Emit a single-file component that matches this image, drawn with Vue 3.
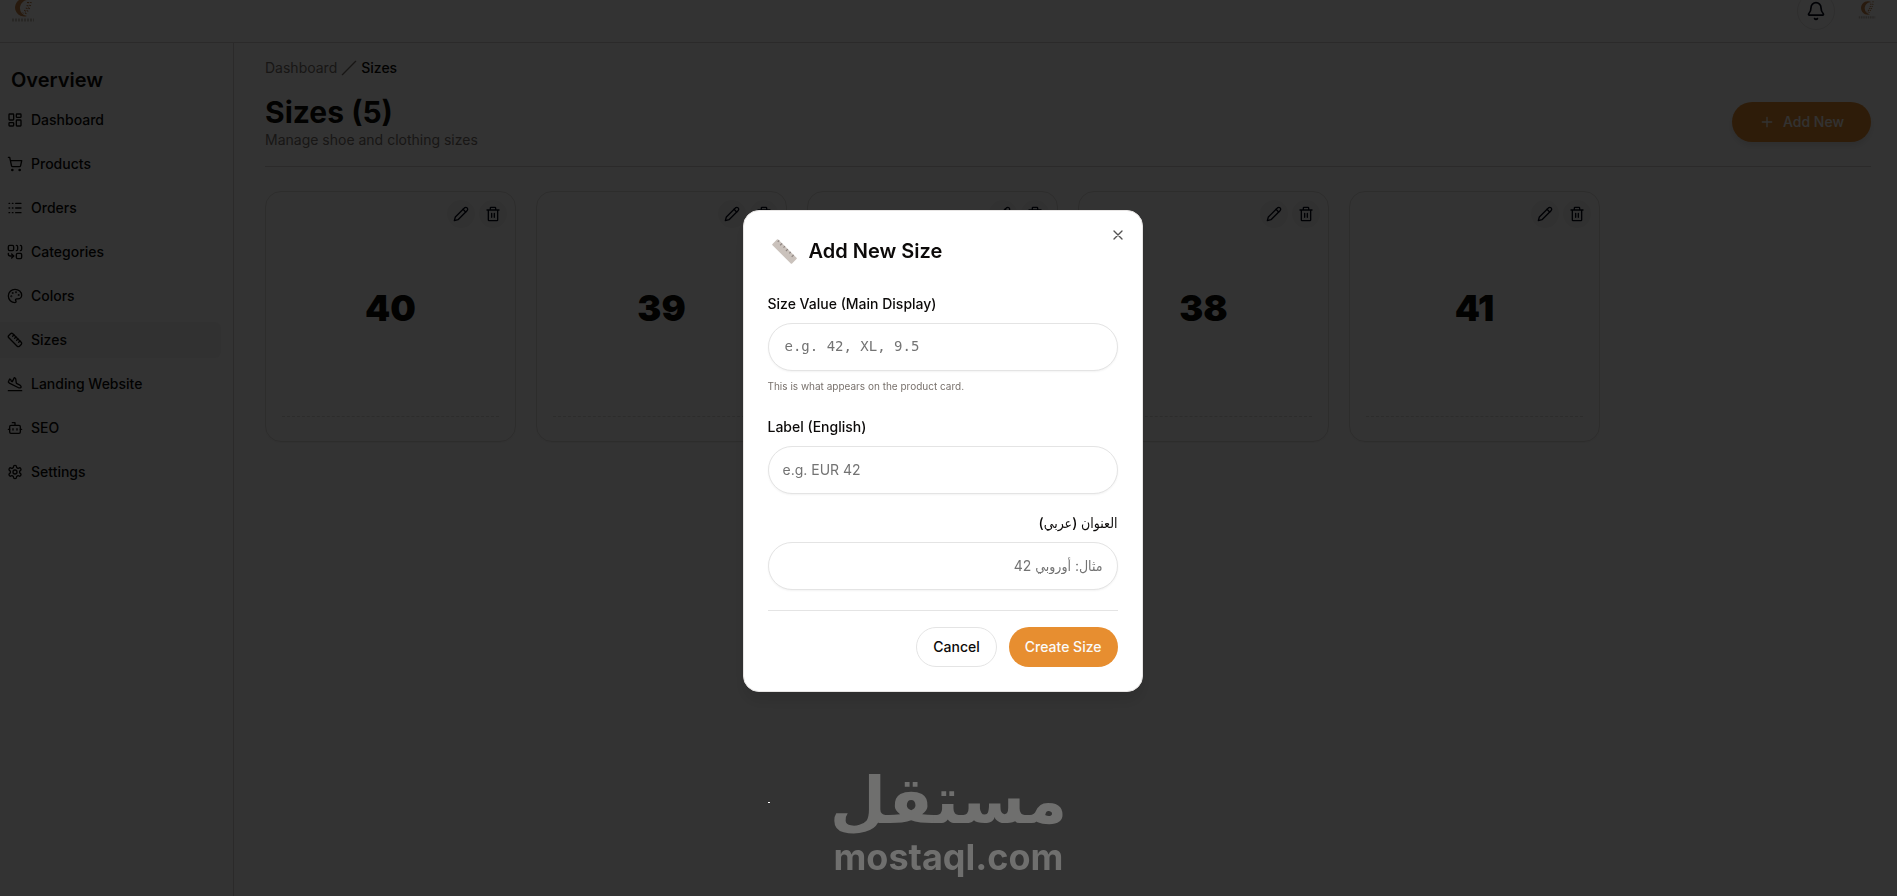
<script setup>
import { ref } from 'vue'

const menu = [
    { name: 'Dashboard', icon: 'dashboard' },
    { name: 'Products', icon: 'cart' },
    { name: 'Orders', icon: 'list' },
    { name: 'Categories', icon: 'combine' },
    { name: 'Colors', icon: 'palette' },
    { name: 'Sizes', icon: 'ruler' },
    { name: 'Landing Website', icon: 'plane' },
    { name: 'SEO', icon: 'bot' },
    { name: 'Settings', icon: 'settings' }
]

const icons = {
    dashboard: '<rect width="7" height="9" x="3" y="3" rx="1"/><rect width="7" height="5" x="14" y="3" rx="1"/><rect width="7" height="9" x="14" y="12" rx="1"/><rect width="7" height="5" x="3" y="16" rx="1"/>',
    cart: '<circle cx="8" cy="21" r="1"/><circle cx="19" cy="21" r="1"/><path d="M2.05 2.05h2l2.66 12.42a2 2 0 0 0 2 1.58h9.78a2 2 0 0 0 1.95-1.57l1.65-7.43H5.12"/>',
    list: '<path d="M3 5h1M3 12h1M3 19h1M8 5h1M8 12h1M8 19h1M13 5h8M13 12h8M13 19h8"/>',
    combine: '<path d="M10 18H5a3 3 0 0 1-3-3v-1"/><path d="M14 2a2 2 0 0 1 2 2v4a2 2 0 0 1-2 2"/><path d="M20 2a2 2 0 0 1 2 2v4a2 2 0 0 1-2 2"/><path d="m7 21 3-3-3-3"/><rect x="14" y="14" width="8" height="8" rx="2"/><rect x="2" y="2" width="8" height="8" rx="2"/>',
    palette: '<circle cx="13.5" cy="6.5" r=".5"/><circle cx="17.5" cy="10.5" r=".5"/><circle cx="8.5" cy="7.5" r=".5"/><circle cx="6.5" cy="12.5" r=".5"/><path d="M12 2C6.5 2 2 6.5 2 12s4.5 10 10 10c.926 0 1.648-.746 1.648-1.688 0-.437-.18-.835-.437-1.125-.29-.289-.438-.652-.438-1.125a1.64 1.64 0 0 1 1.668-1.668h1.996c3.051 0 5.555-2.503 5.555-5.554C21.965 6.012 17.461 2 12 2z"/>',
    ruler: '<path d="M21.3 15.3a2.4 2.4 0 0 1 0 3.4l-2.6 2.6a2.4 2.4 0 0 1-3.4 0L2.7 8.7a2.41 2.41 0 0 1 0-3.4l2.6-2.6a2.41 2.41 0 0 1 3.4 0Z"/><path d="m14.5 12.5 2-2M11.5 9.5l2-2M8.5 6.5l2-2M17.5 15.5l2-2"/>',
    plane: '<path d="M2 22h20"/><path d="M3.77 10.77 2 9l2-4.5 1.1.55c.55.28.9.84.9 1.45s.35 1.17.9 1.45L8 8.5l3-6 1.05.53a2 2 0 0 1 1.09 1.52l.72 5.4a2 2 0 0 0 1.09 1.52l4.4 2.2c.42.22.78.55 1.01.96l.6 1.03c.49.88-.06 1.98-1.06 2.1l-1.18.15c-.47.06-.95-.02-1.37-.24L4.29 11.15a2 2 0 0 1-.52-.38Z"/>',
    bot: '<path d="M12 8V4H8"/><rect width="16" height="12" x="4" y="8" rx="2"/><path d="M2 14h2M20 14h2M15 13v2M9 13v2"/>',
    settings: '<path d="M12.22 2h-.44a2 2 0 0 0-2 2v.18a2 2 0 0 1-1 1.73l-.43.25a2 2 0 0 1-2 0l-.15-.08a2 2 0 0 0-2.73.73l-.22.38a2 2 0 0 0 .73 2.73l.15.1a2 2 0 0 1 1 1.72v.51a2 2 0 0 1-1 1.74l-.15.09a2 2 0 0 0-.73 2.73l.22.38a2 2 0 0 0 2.73.73l.15-.08a2 2 0 0 1 2 0l.43.25a2 2 0 0 1 1 1.73V20a2 2 0 0 0 2 2h.44a2 2 0 0 0 2-2v-.18a2 2 0 0 1 1-1.73l.43-.25a2 2 0 0 1 2 0l.15.08a2 2 0 0 0 2.73-.73l.22-.39a2 2 0 0 0-.73-2.73l-.15-.08a2 2 0 0 1-1-1.74v-.5a2 2 0 0 1 1-1.74l.15-.09a2 2 0 0 0 .73-2.73l-.22-.38a2 2 0 0 0-2.73-.73l-.15.08a2 2 0 0 1-2 0l-.43-.25a2 2 0 0 1-1-1.73V4a2 2 0 0 0-2-2z"/><circle cx="12" cy="12" r="3"/>'
}

const sizes = ref(['40', '39', '37', '38', '41'])

const form = ref({ value: '', labelEn: '', labelAr: '' })
const modalOpen = ref(true)

const createSize = function () {
    if (!form.value.value) return
    sizes.value.push(form.value.value)
    form.value = { value: '', labelEn: '', labelAr: '' }
    modalOpen.value = false
}
</script>

<template>
    <div class="layout">
        <header class="topbar">
            <a href="#" class="brand" aria-label="Home">
                <svg class="logo" viewBox="0 0 24 28" fill="none">
                    <path d="M18 3A9 9 0 1 0 16 19 8 8 0 0 1 18 3z" fill="#c98445"/>
                    <path d="M20 2c0 7-3 12-7 16M17 5c0 5-2 8-5 11" stroke="#b9743a" stroke-width="2" stroke-dasharray="1 2"/>
                    <path d="M1 23h22" stroke="#c9c0b8" stroke-width="3" stroke-dasharray="2 1"/>
                </svg>
            </a>
            <div class="topbar-right">
                <button class="bell" aria-label="Notifications">
                    <svg class="icon-lg" viewBox="0 0 24 24"><path d="M10.268 21a2 2 0 0 0 3.464 0"/><path d="M3.262 15.326A1 1 0 0 0 4 17h16a1 1 0 0 0 .74-1.673C19.41 13.956 18 12.499 18 8A6 6 0 0 0 6 8c0 4.499-1.411 5.956-2.738 7.326"/></svg>
                </button>
                <a href="#" class="avatar" aria-label="Profile">
                    <svg class="logo-small" viewBox="0 0 24 28" fill="none">
                        <path d="M18 3A9 9 0 1 0 16 19 8 8 0 0 1 18 3z" fill="#c98445"/>
                        <path d="M20 2c0 7-3 12-7 16M17 5c0 5-2 8-5 11" stroke="#b9743a" stroke-width="2" stroke-dasharray="1 2"/>
                        <path d="M1 23h22" stroke="#c9c0b8" stroke-width="3" stroke-dasharray="2 1"/>
                    </svg>
                </a>
            </div>
        </header>

        <div class="body">
            <aside class="sidebar">
                <h2>Overview</h2>
                <nav>
                    <a v-for="item in menu" :key="item.name" href="#" class="menu-item" :class="{ active: item.name === 'Sizes' }">
                        <svg class="icon" viewBox="0 0 24 24" v-html="icons[item.icon]"></svg>
                        {{ item.name }}
                    </a>
                </nav>
            </aside>

            <main>
                <div class="breadcrumb">
                    <a href="#">Dashboard</a>
                    <svg class="icon" viewBox="0 0 24 24"><path d="M22 2 2 22"/></svg>
                    <span>Sizes</span>
                </div>

                <div class="page-head">
                    <div>
                        <h1>Sizes ({{ sizes.length }})</h1>
                        <p>Manage shoe and clothing sizes</p>
                    </div>
                    <button class="add-new" @click="modalOpen = true">
                        <svg class="icon" viewBox="0 0 24 24"><path d="M5 12h14M12 5v14"/></svg>
                        Add New
                    </button>
                </div>

                <div class="size-grid">
                    <div v-for="size in sizes" :key="size" class="size-card">
                        <div class="card-tools">
                            <button aria-label="Edit">
                                <svg class="icon" viewBox="0 0 24 24"><path d="M17 3a2.85 2.83 0 1 1 4 4L7.5 20.5 2 22l1.5-5.500Z"/><path d="m15 5 4 4"/></svg>
                            </button>
                            <button aria-label="Delete">
                                <svg class="icon" viewBox="0 0 24 24"><path d="M3 6h18M19 6v15a1 1 0 0 1-1 1H6a1 1 0 0 1-1-1V6M8 6V3a1 1 0 0 1 1-1h6a1 1 0 0 1 1 1v3M10 11v6M14 11v6"/></svg>
                            </button>
                        </div>
                        <div class="size-value">{{ size }}</div>
                        <div class="card-foot"></div>
                    </div>
                </div>
            </main>
        </div>
    </div>

    <div v-if="modalOpen" class="overlay">
        <form class="modal" role="dialog" aria-labelledby="modal-title" @submit.prevent="createSize">
            <button type="button" class="close" aria-label="Close" @click="modalOpen = false">
                <svg class="icon" viewBox="0 0 24 24"><path d="M18 6 6 18M6 6l12 12"/></svg>
            </button>
            <h2 id="modal-title">
                <svg class="ruler" viewBox="3 3 26 26">
                    <path d="M9.500 3.500 28.500 22.500a1 1 0 0 1 0 1.400l-4.600 4.600a1 1 0 0 1-1.400 0L3.500 9.500a1 1 0 0 1 0-1.400l4.600-4.600a1 1 0 0 1 1.400 0z" fill="#cac2bc"/>
                    <path d="m10.500 4.500-1.500 1.500M13.500 7.500l-2 2M16.500 10.500 15 12M19.500 13.500l-2 2M22.500 16.500 21 18M25.500 19.500l-2 2" stroke="#8e8581" stroke-width="1.200"/>
                </svg>
                Add New Size
            </h2>

            <div class="fields">
                <div class="field">
                    <label for="size-value">Size Value (Main Display)</label>
                    <input id="size-value" v-model="form.value" class="mono" type="text" placeholder="e.g. 42, XL, 9.5">
                    <p class="hint">This is what appears on the product card.</p>
                </div>
                <div class="field">
                    <label for="label-en">Label (English)</label>
                    <input id="label-en" v-model="form.labelEn" type="text" placeholder="e.g. EUR 42">
                </div>
                <div class="field" dir="rtl">
                    <label for="label-ar">العنوان (عربي)</label>
                    <input id="label-ar" v-model="form.labelAr" type="text" placeholder="مثال: أوروبي 42">
                </div>
            </div>

            <div class="actions">
                <button type="button" class="cancel" @click="modalOpen = false">Cancel</button>
                <button type="submit" class="create">Create Size</button>
            </div>
        </form>
    </div>

    <div class="watermark">
        <div class="watermark-ar" lang="ar">مستقل</div>
        <div class="watermark-en">mostaql.com</div>
    </div>
    <span class="cursor"></span>
</template>

<style>
body {
    margin: 0;
    background: #fff;
}
</style>

<style scoped>
.layout,
.overlay {
    font-family: Inter, "DejaVu Sans Condensed", "DejaVu Sans", sans-serif;
    font-size: 14px;
    line-height: 20px;
    color: #0c0a09;
}

.layout {
    min-height: 100vh;
    display: flex;
    flex-direction: column;
    overflow: hidden;
}

* {
    box-sizing: border-box;
}

h1, h2, p {
    margin: 0;
}

a {
    color: inherit;
    text-decoration: none;
}

button {
    font: inherit;
    color: inherit;
    cursor: pointer;
    padding: 0;
}

.icon,
.icon-lg {
    width: 16px;
    height: 16px;
    flex: none;
    fill: none;
    stroke: currentColor;
    stroke-width: 2;
    stroke-linecap: round;
    stroke-linejoin: round;
}

.icon-lg {
    width: 20px;
    height: 20px;
}

/* top bar, partly scrolled out of view */
.topbar {
    height: 64px;
    margin-top: -21px;
    padding: 0 10px 0 11px;
    border-bottom: 1px solid #d6d3d1;
    display: flex;
    align-items: center;
    justify-content: space-between;
}

.brand,
.avatar {
    display: flex;
    justify-content: center;
}

.logo {
    width: 24px;
    height: 28px;
}

.logo-small {
    width: 18px;
    height: 21px;
}

.topbar-right {
    display: flex;
    align-items: center;
    gap: 12px;
}

.avatar {
    width: 40px;
}

.bell {
    width: 38px;
    height: 38px;
    border: 1px solid #e7e5e4;
    border-radius: 50%;
    background: #fff;
    color: #020617;
    display: flex;
    align-items: center;
    justify-content: center;
}

.body {
    flex: 1;
    display: flex;
}

.sidebar {
    width: 234px;
    flex: none;
    border-right: 1px solid #d6d3d1;
    padding: 23px 12px 0 0;
}

.sidebar h2 {
    font-size: 20px;
    line-height: 28px;
    font-weight: 600;
    padding-left: 11px;
    margin-bottom: 8px;
}

.sidebar nav {
    display: flex;
    flex-direction: column;
    gap: 8px;
}

.menu-item {
    height: 36px;
    padding-left: 7px;
    display: flex;
    align-items: center;
    gap: 8px;
    font-weight: 500;
    border-radius: 0 6px 6px 0;
}

.menu-item.active {
    background: #f5f5f4;
}

main {
    flex: 1;
    min-width: 0;
    padding: 15px 26px 0 31px;
}

.breadcrumb {
    display: flex;
    align-items: center;
    gap: 4px;
    margin-bottom: 16px;
    color: #78716c;
}

.breadcrumb span {
    color: #0c0a09;
    font-weight: 500;
}

.page-head {
    display: flex;
    align-items: center;
    justify-content: space-between;
    padding-bottom: 16px;
    border-bottom: 1px solid #d6d3d1;
}

.page-head h1 {
    font-size: 30px;
    line-height: 36px;
    font-weight: 700;
}

.page-head p {
    color: #78716c;
}

.add-new {
    height: 40px;
    padding: 0 27px;
    border: none;
    border-radius: 20px;
    background: #e78e30;
    color: #fafaf9;
    font-weight: 500;
    display: flex;
    align-items: center;
    gap: 8px;
    box-shadow: 0 4px 6px rgba(0, 0, 0, .1);
}

.size-grid {
    display: grid;
    grid-template-columns: repeat(6, 1fr);
    gap: 20px;
    margin-top: 24px;
}

.size-card {
    position: relative;
    aspect-ratio: 1;
    border: 1px solid #e0dedc;
    border-radius: 16px;
    padding: 16px;
    display: flex;
    flex-direction: column;
    box-shadow: 0 1px 2px rgba(0, 0, 0, .05);
}

.card-tools {
    position: absolute;
    top: 8px;
    right: 8px;
    display: flex;
    gap: 4px;
}

.card-tools button {
    width: 28px;
    height: 28px;
    border: none;
    border-radius: 50%;
    background: #f5f5f4;
    color: #020617;
    display: flex;
    align-items: center;
    justify-content: center;
}

.size-value {
    flex: 1;
    display: flex;
    align-items: center;
    justify-content: center;
    padding-bottom: 8px;
    font-size: 36px;
    line-height: 40px;
    font-weight: 900;
}

.card-foot {
    height: 9px;
    border-top: 1px dashed #dcdad8;
}

.overlay {
    position: fixed;
    inset: 0;
    background: rgba(0, 0, 0, .8);
    display: flex;
    align-items: center;
    justify-content: center;
    padding: 6px 12px 0 0;
}

.modal {
    position: relative;
    width: 400px;
    padding: 24px;
    border: 1px solid #e7e5e4;
    border-radius: 16px;
    background: #fff;
    box-shadow: 0 10px 15px rgba(0, 0, 0, .1);
}

.modal h2 {
    display: flex;
    align-items: center;
    gap: 12px;
    padding-left: 4px;
    font-size: 20px;
    line-height: 32px;
    font-weight: 600;
}

.ruler {
    width: 25px;
    height: 25px;
}

.close {
    position: absolute;
    top: 16px;
    right: 16px;
    border: none;
    background: none;
    display: flex;
    opacity: .7;
}

.fields {
    display: flex;
    flex-direction: column;
    gap: 22px;
    margin-top: 30px;
}

.field {
    display: flex;
    flex-direction: column;
}

.field label {
    line-height: 14px;
    font-weight: 500;
    margin-bottom: 12px;
}

.field input {
    width: 100%;
    height: 48px;
    padding: 0 14px 2px;
    border: 1px solid #e4e4e4;
    border-radius: 24px;
    background: #fff;
    color: inherit;
    font: inherit;
    box-shadow: 0 1px 2px rgba(0, 0, 0, .05);
}

.field input::placeholder {
    color: #737373;
    opacity: 1;
}

.field input.mono {
    font-family: "DejaVu Sans Mono", monospace;
    padding: 0 16px 2px;
}

.hint {
    margin: 6px 0 2px;
    font-size: 10px;
    line-height: 19px;
    color: #78716c;
}

.actions {
    display: flex;
    justify-content: flex-end;
    gap: 12px;
    margin-top: 20px;
    padding-top: 16px;
    border-top: 1px solid #e4e4e4;
}

.actions button {
    height: 40px;
    padding: 0 16px;
    border: 1px solid #e4e4e4;
    border-radius: 20px;
    background: #fff;
    font-weight: 500;
}

.actions .create {
    border: none;
    background: #e78e30;
    color: #fafaf9;
}

.watermark {
    position: fixed;
    left: 0;
    right: 0;
    bottom: 19px;
    text-align: center;
    color: #6f6f6e;
    font-weight: 700;
    pointer-events: none;
}

.watermark-ar {
    font-family: "DejaVu Sans", sans-serif;
    font-size: 65px;
    line-height: 72px;
}

.watermark-en {
    font-family: Inter, "Liberation Sans", sans-serif;
    font-size: 36px;
    line-height: 40px;
}

.cursor {
    position: fixed;
    left: 768px;
    bottom: 93px;
    width: 2px;
    height: 1px;
    background: #fff;
}
</style>
